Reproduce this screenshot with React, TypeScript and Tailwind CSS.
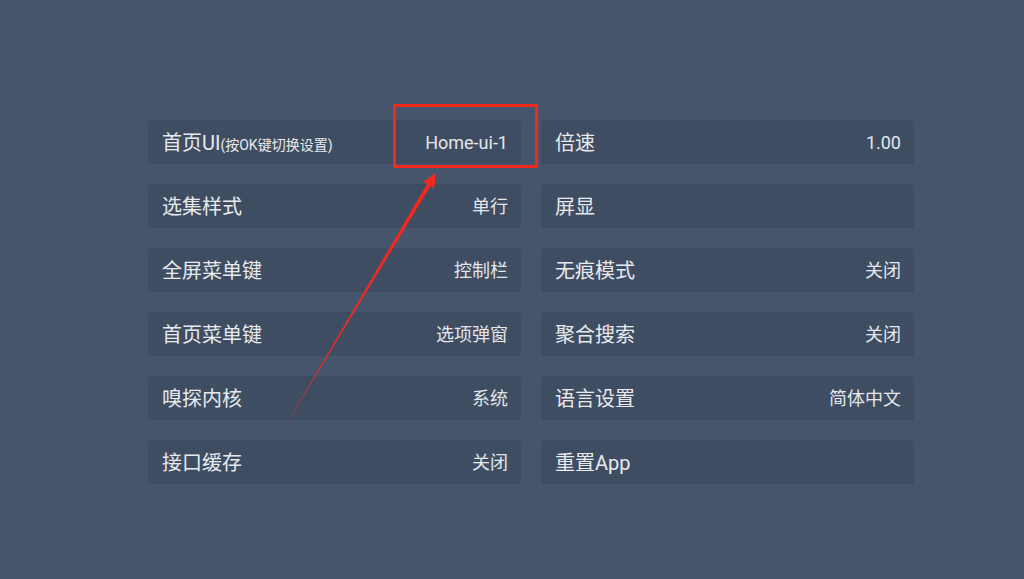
import * as React from "react"

const rows: [string, string, string, string][] = [
  ["首页UI", "Home-ui-1", "倍速", "1.00"],
  ["选集样式", "单行", "屏显", ""],
  ["全屏菜单键", "控制栏", "无痕模式", "关闭"],
  ["首页菜单键", "选项弹窗", "聚合搜索", "关闭"],
  ["嗅探内核", "系统", "语言设置", "简体中文"],
  ["接口缓存", "关闭", "重置App", ""],
]

function Item({ label, value, hint }: { label: string; value: string; hint?: string }) {
  return (
    <div className="h-[44px] rounded-[4px] bg-[#3f4d63] flex items-center justify-between pl-[14px] pr-[13px] pt-[2px]">
      <span className="text-[20px] text-[#e8eaee] leading-none">
        {label}
        {hint && <span className="text-[14px]">{hint}</span>}
      </span>
      <span className="text-[18px] text-[#e3e6ea] leading-none">{value}</span>
    </div>
  )
}

export default function App() {
  return (
    <div
      className="relative w-full h-screen bg-[#45556c] overflow-hidden"
      style={{ fontFamily: 'Roboto, "Noto Sans CJK SC", sans-serif' }}
    >
      <div className="pt-[120px] pl-[148px]">
        <div className="grid grid-cols-[373px_373px] gap-x-[20px] gap-y-[20px]">
          {rows.map((r, i) => (
            <React.Fragment key={i}>
              <Item label={r[0]} value={r[1]} hint={i === 0 ? "(按OK键切换设置)" : undefined} />
              <Item label={r[2]} value={r[3]} />
            </React.Fragment>
          ))}
        </div>
      </div>

      {/* annotation: red box + arrow */}
      <div className="absolute left-[393px] top-[104px] w-[145px] h-[64px] border-[3px] border-[#f5281e]" />
      <svg className="absolute inset-0 pointer-events-none" width="1024" height="579">
        <polygon
          points="283,430 430.5,186 434,188.5 436,173 423.5,181.5 427,184"
          fill="#f5281e"
        />
      </svg>
    </div>
  )
}
